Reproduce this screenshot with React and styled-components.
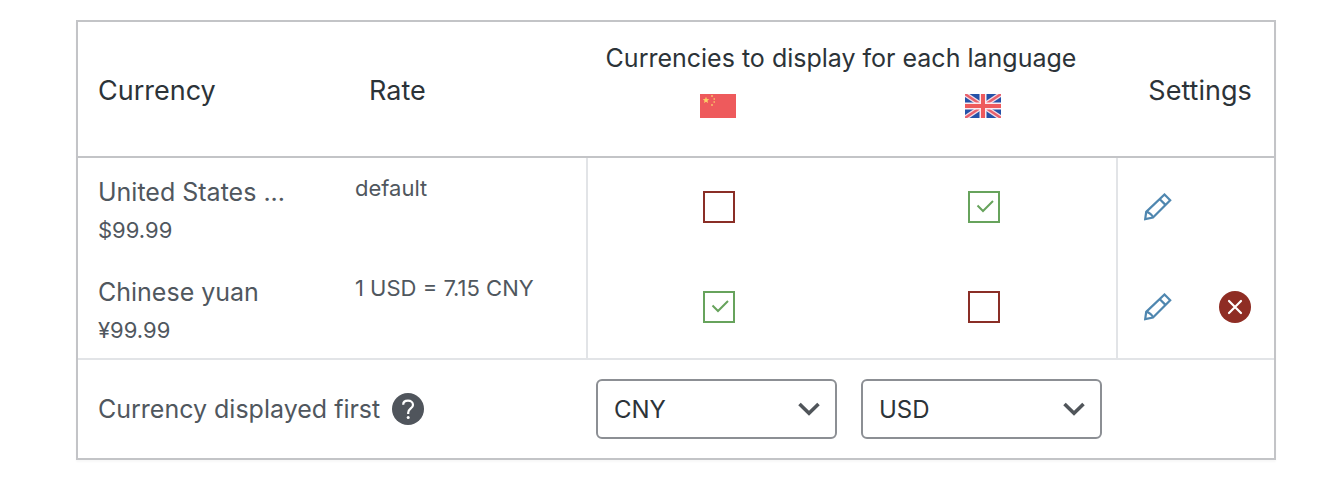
import { useState } from "react"
import styled, { createGlobalStyle } from "styled-components"

const GlobalStyle = createGlobalStyle`
*{
  box-sizing: border-box;
}
body{
  margin: 0;
  background-color: #fff;
  font-family: Inter, "Liberation Sans", sans-serif;
  color: #50575e;
}
`

const Page = styled.main`
  padding: 20px 44px 18px 76px;
`

const Table = styled.table`
  width: 100%;
  table-layout: fixed;
  border: 2px solid #c3c4c7;
  border-collapse: separate;
  border-spacing: 0;
  box-shadow: 0 2px 2px rgba(0, 0, 0, 0.03);
`

const Col = styled.col`
  width: ${(p) => p.$width};
`

const HeadCell = styled.th`
  padding: 4px 0 0 ${(p) => p.$left || "0"};
  border-bottom: 2px solid #c3c4c7;
  font-size: 27px;
  font-weight: 400;
  line-height: 36px;
  text-align: ${(p) => p.$align || "left"};
  vertical-align: middle;
  color: #2c3338;
`

const GroupHead = styled(HeadCell)`
  padding: 18px 24px 18px 0;
  border-bottom: none;
  font-size: 25px;
  white-space: nowrap;
`

const FlagHead = styled(HeadCell)`
  padding: 0 4px 38px 0;
  svg{
    display: block;
    margin: 0 auto;
  }
`

const Cell = styled.td`
  height: ${(p) => (p.$last ? "102px" : "100px")};
  padding: 15px 0 0 ${(p) => p.$left || "0"};
  border-right: ${(p) => (p.$divider ? "2px solid #e2e4e7" : "none")};
  border-bottom: ${(p) => (p.$last ? "2px solid #e2e4e7" : "none")};
  vertical-align: top;
`

const CheckCell = styled(Cell)`
  padding: 0 ${(p) => (p.$divider ? "1px" : "2px")} 2px 0;
  vertical-align: middle;
`

const ActionCell = styled(Cell)`
  padding: 0 23px 2px 26px;
  vertical-align: middle;
`

const Name = styled.div`
  font-size: 25px;
  line-height: 38px;
  white-space: nowrap;
`

const Price = styled.div`
  font-size: 22px;
  line-height: 38px;
`

const Rate = styled.div`
  font-size: 22px;
  line-height: 30px;
  white-space: nowrap;
`

const CheckLabel = styled.label`
  display: grid;
  width: 32px;
  height: 32px;
  margin: 0 auto;
  cursor: pointer;
  input, svg{
    grid-area: 1 / 1;
  }
  svg{
    pointer-events: none;
  }
`

const CheckInput = styled.input`
  appearance: none;
  width: 32px;
  height: 32px;
  margin: 0;
  border: 2px solid #8a2e26;
  background-color: #fff;
  &:checked{
    border-color: #67a35c;
  }
`

const Actions = styled.div`
  display: flex;
  align-items: center;
  justify-content: space-between;
`

const IconButton = styled.button`
  display: flex;
  padding: 0;
  border: none;
  background: none;
  color: ${(p) => p.$color};
  cursor: pointer;
`

const FootCell = styled.td`
  height: 98px;
  padding: 0 ${(p) => p.$right || "0"} 0 ${(p) => p.$left || "0"};
  vertical-align: middle;
`

const FirstLabel = styled.div`
  display: flex;
  align-items: center;
  gap: 12px;
  font-size: 25px;
  line-height: 36px;
  white-space: nowrap;
`

const SelectBox = styled.div`
  display: grid;
  align-items: center;
  select, svg{
    grid-area: 1 / 1;
  }
  svg{
    justify-self: end;
    margin-right: 16px;
    pointer-events: none;
  }
`

const Select = styled.select`
  appearance: none;
  width: 100%;
  height: 60px;
  padding: 0 48px 0 16px;
  border: 2px solid #8c8f94;
  border-radius: 6px;
  background-color: #fff;
  font-family: inherit;
  font-size: 24px;
  color: #2c3338;
`

function ChinaFlag() {
  return <svg width="36" height="24" viewBox="0 0 36 24" role="img" aria-label="Chinese">
    <rect width="36" height="24" fill="#ee5a5c" />
    <path fill="#fbd267" d="M6 2.8l.9 2.3 2.4.1-1.9 1.5.7 2.4L6 7.7 3.9 9.1l.7-2.4-1.9-1.5 2.4-.1z" />
    <g fill="#f5a565">
      <rect x="11" y="1" width="2" height="2" />
      <rect x="13.500" y="4" width="1.500" height="2" />
      <rect x="13.500" y="7" width="1.500" height="2" />
      <rect x="11" y="10" width="2" height="2" />
    </g>
  </svg>
}

function UkFlag() {
  return <svg width="36" height="24" viewBox="0 0 36 24" role="img" aria-label="English">
    <rect width="36" height="24" fill="#2552a8" />
    <path d="M0 0L36 24M36 0L0 24" stroke="#f3dce6" strokeWidth="5" />
    <path d="M0 0L36 24M36 0L0 24" stroke="#e8606c" strokeWidth="2.400" />
    <path d="M18 0V24M0 12H36" stroke="#fbeaf0" strokeWidth="7" />
    <path d="M18 0V24M0 12H36" stroke="#ee5a5c" strokeWidth="4" />
  </svg>
}

function PencilIcon() {
  return <svg width="28" height="28" viewBox="0 0.500 28 28" fill="none" stroke="currentColor" strokeWidth="2.200">
    <path d="M20.500 2L26.200 7.700L9 25.100L1.200 26.600L2.200 19.400Z" />
    <path d="M15.800 6.700L21.500 12.400M2.200 19.400C4.500 19.400 8.800 22.800 9 25.100" />
  </svg>
}

function DeleteIcon() {
  return <svg width="32" height="32" viewBox="0 0 32 32">
    <circle cx="16" cy="16" r="16" fill="currentColor" />
    <path d="M10 10L22 22M22 10L10 22" stroke="#fff" strokeWidth="2.200" strokeLinecap="round" />
  </svg>
}

function HelpIcon() {
  return <svg width="32" height="32" viewBox="0 0 32 32" fill="none">
    <circle cx="16" cy="16" r="16" fill="currentColor" />
    <path d="M11.200 11.700C11.200 9.100 13.200 7.700 16 7.700S21 9.300 21 11.900C21 15.500 16.200 15.500 16.200 19.800V21" stroke="#fff" strokeWidth="2.200" />
    <circle cx="16.200" cy="24.600" r="1.500" fill="#fff" />
  </svg>
}

function Check({ label, initial }) {
  const [checked, setChecked] = useState(initial)
  return <CheckLabel>
    <CheckInput
      type="checkbox"
      aria-label={label}
      checked={checked}
      onChange={(e) => setChecked(e.target.checked)}
    />
    {checked && <svg width="32" height="32" viewBox="0 0 32 32" fill="none">
      <path d="M9.500 14.500L15 20L25 10" stroke="#67a35c" strokeWidth="2" />
    </svg>}
  </CheckLabel>
}

function CurrencySelect({ label, value }) {
  return <SelectBox>
    <Select aria-label={label} defaultValue={value}>
      <option>CNY</option>
      <option>USD</option>
    </Select>
    <svg width="24" height="16" viewBox="0 0 24 16" fill="none">
      <path d="M2.500 3L12 12.200L21.500 3" stroke="#50555a" strokeWidth="3.600" />
    </svg>
  </SelectBox>
}

const currencies = [
  { name: "United States ...", price: "$99.99", rate: "default", zh: false, en: true, removable: false },
  { name: "Chinese yuan", price: "¥99.99", rate: "1 USD = 7.15 CNY", zh: true, en: false, removable: true },
]

export default function App() {
  return <Page>
    <GlobalStyle />
    <Table>
      <colgroup>
        <Col />
        <Col $width="243px" />
        <Col $width="265px" />
        <Col $width="265px" />
        <Col $width="156px" />
      </colgroup>
      <thead>
        <tr>
          <HeadCell rowSpan={2} $left="20px">Currency</HeadCell>
          <HeadCell rowSpan={2} $left="24px">Rate</HeadCell>
          <GroupHead colSpan={2} $align="center">Currencies to display for each language</GroupHead>
          <HeadCell rowSpan={2} $left="8px" $align="center">Settings</HeadCell>
        </tr>
        <tr>
          <FlagHead><ChinaFlag /></FlagHead>
          <FlagHead><UkFlag /></FlagHead>
        </tr>
      </thead>
      <tbody>
        {currencies.map((c, i) => {
          const last = i === currencies.length - 1
          return <tr key={c.name}>
            <Cell $left="20px" $last={last}>
              <Name>{c.name}</Name>
              <Price>{c.price}</Price>
            </Cell>
            <Cell $left="10px" $last={last} $divider>
              <Rate>{c.rate}</Rate>
            </Cell>
            <CheckCell $last={last}>
              <Check label={`${c.name}, Chinese`} initial={c.zh} />
            </CheckCell>
            <CheckCell $last={last} $divider>
              <Check label={`${c.name}, English`} initial={c.en} />
            </CheckCell>
            <ActionCell $last={last}>
              <Actions>
                <IconButton type="button" $color="#4f87b0" aria-label={`Edit ${c.name}`}><PencilIcon /></IconButton>
                {c.removable && <IconButton type="button" $color="#8f2d24" aria-label={`Delete ${c.name}`}><DeleteIcon /></IconButton>}
              </Actions>
            </ActionCell>
          </tr>
        })}
      </tbody>
      <tfoot>
        <tr>
          <FootCell colSpan={2} $left="20px">
            <FirstLabel>
              Currency displayed first
              <IconButton type="button" $color="#50555c" aria-label="Help"><HelpIcon /></IconButton>
            </FirstLabel>
          </FootCell>
          <FootCell $left="8px" $right="16px">
            <CurrencySelect label="Currency displayed first, Chinese" value="CNY" />
          </FootCell>
          <FootCell $left="8px" $right="16px">
            <CurrencySelect label="Currency displayed first, English" value="USD" />
          </FootCell>
          <FootCell />
        </tr>
      </tfoot>
    </Table>
  </Page>
}
